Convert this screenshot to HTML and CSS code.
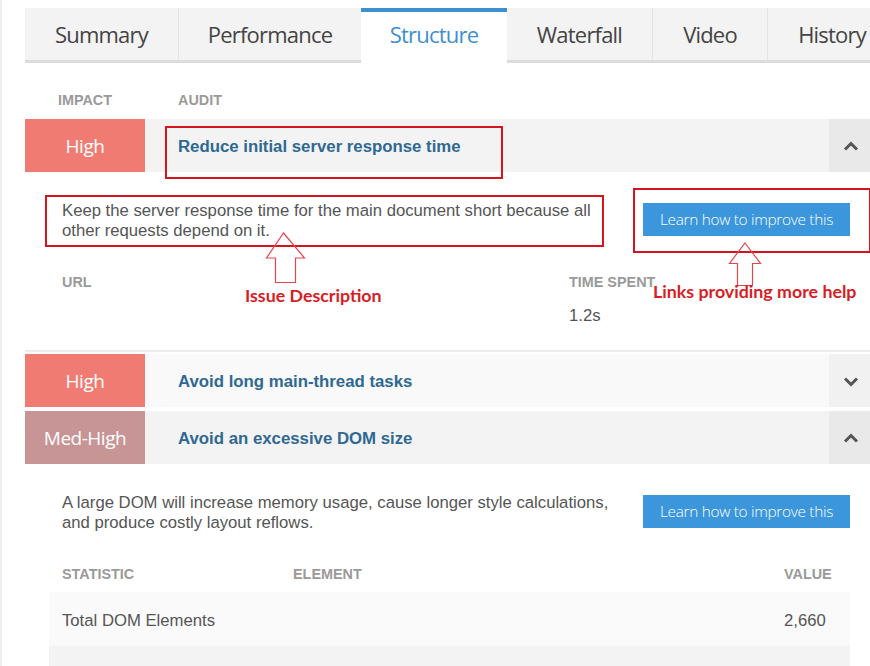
FILE: index.html
```html
<!DOCTYPE html>
<html lang="en">
<head>
<meta charset="utf-8">
<title>Structure</title>
<link rel="stylesheet" href="styles.css">
</head>
<body>
<div class="page">
  <nav class="tabs">
    <a class="tab tab-summary">Summary</a>
    <a class="tab tab-performance">Performance</a>
    <a class="tab tab-structure active">Structure</a>
    <a class="tab tab-waterfall">Waterfall</a>
    <a class="tab tab-video">Video</a>
    <a class="tab tab-history">History</a>
  </nav>

  <div class="audits">
    <div class="thead">
      <span class="th-impact">IMPACT</span>
      <span class="th-audit">AUDIT</span>
    </div>

    <div class="audit open">
      <div class="audit-row">
        <div class="impact high">High</div>
        <div class="title">Reduce initial server response time</div>
        <div class="toggle"><svg width="16" height="12" viewBox="0 0 16 12"><polyline points="2,9.5 8,3.5 14,9.5" fill="none" stroke="#555" stroke-width="3"/></svg></div>
      </div>
      <div class="details">
        <div class="desc-row">
          <p class="desc">Keep the server response time for the main document short because all other requests depend on it.</p>
          <a class="btn">Learn how to improve this</a>
        </div>
        <div class="grid url-grid">
          <div class="th">URL</div>
          <div class="th">TIME SPENT</div>
          <div class="td"></div>
          <div class="td">1.2s</div>
        </div>
      </div>
    </div>

    <div class="audit">
      <div class="audit-row hover">
        <div class="impact high">High</div>
        <div class="title">Avoid long main-thread tasks</div>
        <div class="toggle"><svg width="16" height="12" viewBox="0 0 16 12"><polyline points="2,3.5 8,9.5 14,3.5" fill="none" stroke="#555" stroke-width="3"/></svg></div>
      </div>
    </div>

    <div class="audit open">
      <div class="audit-row">
        <div class="impact medhigh">Med-High</div>
        <div class="title">Avoid an excessive DOM size</div>
        <div class="toggle"><svg width="16" height="12" viewBox="0 0 16 12"><polyline points="2,9.5 8,3.5 14,9.5" fill="none" stroke="#555" stroke-width="3"/></svg></div>
      </div>
      <div class="details">
        <div class="desc-row">
          <p class="desc">A large DOM will increase memory usage, cause longer style calculations, and produce costly layout reflows.</p>
          <a class="btn">Learn how to improve this</a>
        </div>
        <div class="grid stat-grid">
          <div class="th">STATISTIC</div>
          <div class="th">ELEMENT</div>
          <div class="th">VALUE</div>
          <div class="td">Total DOM Elements</div>
          <div class="td"></div>
          <div class="td">2,660</div>
          <div class="td alt"></div>
          <div class="td alt"></div>
          <div class="td alt"></div>
        </div>
      </div>
    </div>
  </div>
</div>

<div class="annotations">
  <div class="box box-title"></div>
  <div class="box box-desc"></div>
  <div class="box box-link"></div>
  <svg class="arrow arrow-desc" width="41" height="52" viewBox="0 0 41 52"><polygon points="18.5,1 39.5,26 30.5,26 30.5,50.5 10.5,50.5 10.5,26 1.5,26" fill="none" stroke="#e2474d" stroke-width="1.2"/></svg>
  <svg class="arrow arrow-link" width="34" height="45" viewBox="0 0 34 45"><polygon points="17,1 32.5,21.5 24.5,21.5 24.5,43.5 9.5,43.5 9.5,21.5 1.5,21.5" fill="none" stroke="#e2474d" stroke-width="1.2"/></svg>
  <div class="label label-desc">Issue Description</div>
  <div class="label label-link">Links providing more help</div>
</div>
</body>
</html>
```

FILE: styles.css
```css
* { box-sizing: border-box; }

html, body {
  margin: 0;
  padding: 0;
  background: #fff;
}

body {
  position: relative;
  width: 870px;
  height: 666px;
  overflow: hidden;
  font-family: "Liberation Sans", Arial, sans-serif;
}

.page {
  height: 666px;
  border-left: 2px solid #eeeeee;
  padding: 8px 0 0 23px;
  overflow: hidden;
}

/* Tabs */
.tabs {
  display: flex;
  width: 900px;
  height: 55px;
}

.tab {
  flex: none;
  display: flex;
  align-items: center;
  justify-content: center;
  height: 55px;
  background: #f3f3f3;
  border-bottom: 3px solid #dcdcdc;
  border-right: 1px solid #e4e4e4;
  font-family: "Open Sans", sans-serif;
  font-size: 22px;
  letter-spacing: -0.8px;
  color: #444;
  white-space: nowrap;
}

.tab-summary { width: 154px; }
.tab-performance { width: 182px; border-right: none; }
.tab-structure { width: 146px; }
.tab-waterfall { width: 146px; }
.tab-video { width: 115px; }
.tab-history { width: 128px; border-right: none; }

.tab.active {
  background: #fff;
  border-top: 4px solid #3d8fd0;
  border-bottom: none;
  border-right: none;
  color: #3d8fd0;
  padding-bottom: 7px;
}

/* Audits */
.audits {
  width: 848px;
}

.thead {
  display: flex;
  padding: 29px 0 11px;
  line-height: 16px;
  font-size: 14.4px;
  font-weight: bold;
  color: #9a9a9a;
}

.th-impact {
  width: 120px;
  text-align: center;
}

.th-audit {
  padding-left: 33px;
}

.audit-row {
  display: flex;
  height: 53px;
  background: #f3f3f3;
}

.audit-row.hover { background: #f9f9f9; }

.impact {
  width: 120px;
  display: flex;
  align-items: center;
  justify-content: center;
  color: #fff;
  font-family: "Open Sans", sans-serif;
  font-size: 19px;
  letter-spacing: -0.5px;
}

.impact.high { background: #ef7b72; }
.impact.medhigh { background: #c89596; }

.title {
  flex: 1;
  display: flex;
  align-items: center;
  padding-left: 33px;
  padding-top: 2px;
  font-size: 16.8px;
  font-weight: bold;
  color: #2f6892;
}

.toggle {
  width: 44px;
  display: flex;
  align-items: center;
  justify-content: center;
  background: #e9e9e9;
}

.audit-row.hover .toggle { background: #f1f1f1; }

.details {
  padding: 29px 23px 0 24px;
  border-bottom: 2px solid #ececec;
}

.audit:last-child .details { border-bottom: none; }

.audit + .audit { margin-top: 2px; }
.audit:not(.open) { margin-bottom: 4px; }

.desc-row {
  display: flex;
  align-items: flex-start;
  justify-content: space-between;
  padding-left: 13px;
}

.desc {
  margin: 0;
  width: 560px;
  font-size: 16.7px;
  line-height: 20px;
  color: #555;
}

.btn {
  display: flex;
  align-items: center;
  justify-content: center;
  width: 207px;
  height: 33px;
  margin-top: 2px;
  background: #3b96dc;
  color: #fff;
  font-family: "Open Sans", sans-serif;
  font-size: 15.4px;
  font-weight: 300;
  letter-spacing: -0.3px;
}

.grid {
  display: grid;
  margin-top: 30px;
}

.grid .th {
  padding: 0 13px 7px;
  line-height: 22px;
  font-size: 14.4px;
  font-weight: bold;
  color: #9a9a9a;
}

.grid .td {
  font-size: 16.7px;
  color: #555;
  padding: 0 13px;
}

.url-grid {
  grid-template-columns: 507px 1fr;
  padding-bottom: 23px;
}

.url-grid .th:nth-child(2) { white-space: nowrap; }

.url-grid .td {
  padding-top: 5px;
  line-height: 22px;
}

.stat-grid {
  grid-template-columns: 231px 491px 79px;
}

.stat-grid .td {
  height: 54px;
  display: flex;
  align-items: center;
  padding-top: 3px;
  background: #fafafa;
}

.stat-grid .td.alt { background: #f3f3f3; }

/* Annotations overlay */
.annotations {
  position: absolute;
  inset: 0;
  pointer-events: none;
}

.box {
  position: absolute;
  border: 2px solid #d6141e;
}

.box-title { left: 165px; top: 126px; width: 338px; height: 53px; }
.box-desc { left: 45px; top: 195px; width: 559px; height: 52px; }
.box-link { left: 633px; top: 188px; width: 238px; height: 65px; }

.arrow { position: absolute; }
.arrow-desc { left: 265px; top: 232px; }
.arrow-link { left: 728px; top: 242px; }

.label {
  position: absolute;
  font-family: Lato, "Open Sans", sans-serif;
  font-weight: bold;
  font-size: 17.8px;
  line-height: 22px;
  color: #d71d25;
  white-space: nowrap;
}

.label-desc { left: 245px; top: 284px; }
.label-link { left: 653px; top: 280px; }
```
